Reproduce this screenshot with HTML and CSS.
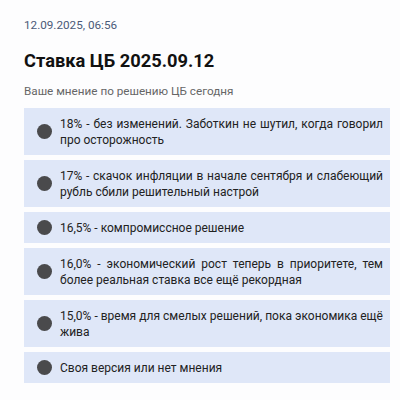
FILE: index.html
```html
<!DOCTYPE html>
<html lang="ru">
<head>
    <meta charset="UTF-8">
    <meta name="viewport" content="width=device-width, initial-scale=1.0">
    <title>Ставка ЦБ 2025.09.12</title>
    <link rel="stylesheet" href="styles.css">
</head>
<body>
    <div class="poll">
        <div class="date">12.09.2025, 06:56</div>
        <h1 class="title">Ставка ЦБ 2025.09.12</h1>
        <div class="subtitle">Ваше мнение по решению ЦБ сегодня</div>
        <div class="options">
            <div class="option">
                <span class="dot"></span>
                <span class="label">18% - без изменений. Заботкин не шутил, когда говорил про осторожность</span>
            </div>
            <div class="option">
                <span class="dot"></span>
                <span class="label">17% - скачок инфляции в начале сентября и слабеющий рубль сбили решительный настрой</span>
            </div>
            <div class="option">
                <span class="dot"></span>
                <span class="label">16,5% - компромиссное решение</span>
            </div>
            <div class="option">
                <span class="dot"></span>
                <span class="label">16,0% - экономический рост теперь в приоритете, тем более реальная ставка все ещё рекордная</span>
            </div>
            <div class="option">
                <span class="dot"></span>
                <span class="label">15,0% - время для смелых решений, пока экономика ещё жива</span>
            </div>
            <div class="option">
                <span class="dot"></span>
                <span class="label">Своя версия или нет мнения</span>
            </div>
        </div>
    </div>
</body>
</html>
```

FILE: styles.css
```css
body {
    margin: 0;
    background-color: #fdfdfe;
    font-family: Roboto, "Liberation Sans", sans-serif;
    color: #1a1a1a;
}
.poll {
    padding: 17px 10px 0 24px;
}
.date {
    font-size: 11.7px;
    line-height: 16px;
    color: #4b5a78;
}
.title {
    margin: 17px 0 0;
    font-size: 18.3px;
    line-height: 22px;
    font-weight: bold;
    color: #111;
}
.subtitle {
    margin-top: 11px;
    font-size: 11.7px;
    line-height: 16px;
    color: #666;
}
.options {
    display: flex;
    flex-direction: column;
    gap: 5px;
    margin-top: 9px;
}
.option {
    display: flex;
    align-items: center;
    gap: 8px;
    padding: 7.5px 7px 7.5px 13px;
    background-color: #dfe7f8;
}
.dot {
    flex: none;
    width: 15px;
    height: 15px;
    border-radius: 50%;
    background-color: #4a4a4c;
}
.label {
    flex: 1;
    font-size: 12px;
    line-height: 16px;
    text-align: justify;
    color: #222;
}
```
